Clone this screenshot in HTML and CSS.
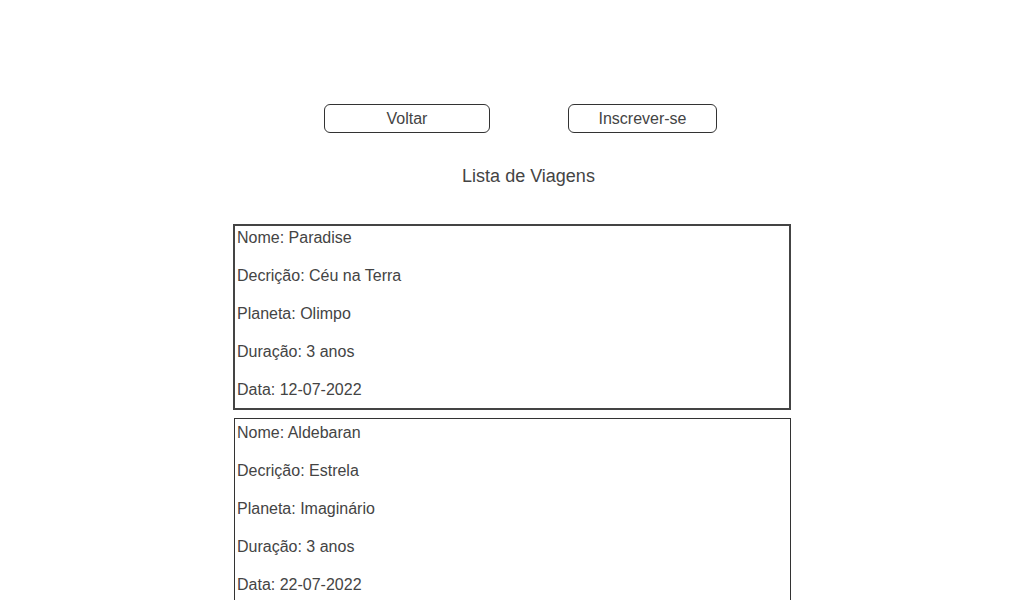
FILE: index.html
```html
<!DOCTYPE html>
<html lang="pt">
<head>
<meta charset="utf-8">
<title>Lista de Viagens</title>
<link rel="stylesheet" href="styles.css">
</head>
<body>
<div class="actions">
  <button class="btn btn-back">Voltar</button>
  <button class="btn btn-signup">Inscrever-se</button>
</div>
<h2 class="title">Lista de Viagens</h2>
<div class="list">
  <div class="card card-active">
    <p>Nome: Paradise</p>
    <p>Decrição: Céu na Terra</p>
    <p>Planeta: Olimpo</p>
    <p>Duração: 3 anos</p>
    <p>Data: 12-07-2022</p>
  </div>
  <div class="card">
    <p>Nome: Aldebaran</p>
    <p>Decrição: Estrela</p>
    <p>Planeta: Imaginário</p>
    <p>Duração: 3 anos</p>
    <p>Data: 22-07-2022</p>
  </div>
</div>
</body>
</html>
```

FILE: styles.css
```css
html, body {
  margin: 0;
  padding: 0;
  background: #fff;
}
body {
  font-family: "Liberation Sans", Arial, sans-serif;
  color: #444;
  font-size: 16px;
}
.actions {
  display: flex;
  gap: 78px;
  padding-top: 104px;
  padding-left: 324px;
}
.btn {
  font-family: "Liberation Sans", Arial, sans-serif;
  font-size: 16px;
  color: #444;
  background: #fff;
  border: 1px solid #333;
  border-radius: 6px;
  height: 29px;
  padding: 0;
  line-height: 27px;
}
.btn-back { width: 166px; }
.btn-signup { width: 149px; }
.title {
  margin: 33px 0 0;
  padding-left: 33px;
  text-align: center;
  font-size: 18px;
  font-weight: normal;
  line-height: 21px;
  color: #444;
}
.list {
  width: 558px;
  margin: 37px auto 0;
  display: flex;
  flex-direction: column;
  gap: 8px;
}
.card {
  border: 1px solid #333;
  margin-left: 1px;
  padding: 3px 2px 8px;
}
.card-active {
  border: 2px solid #444;
  margin-left: 0;
  padding: 1px 2px 7px;
}
.card p {
  margin: 0 0 16px;
  line-height: 22px;
}
.card p:last-child {
  margin-bottom: 0;
}
```
